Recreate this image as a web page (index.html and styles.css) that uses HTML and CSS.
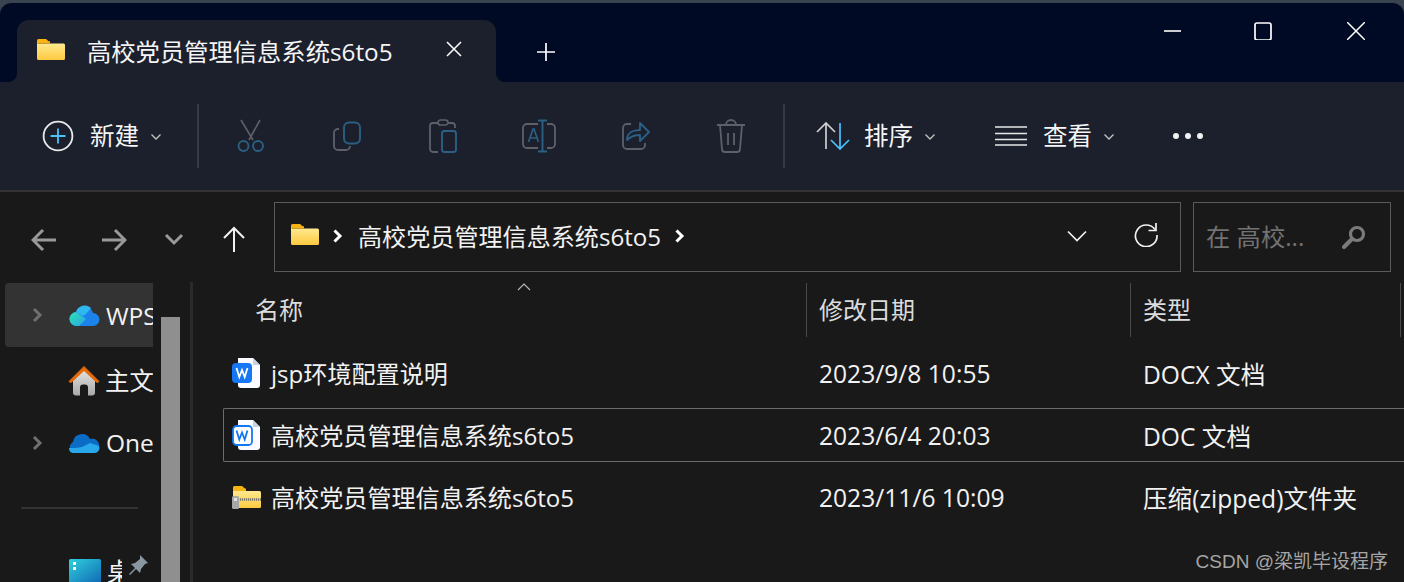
FILE: index.html
```html
<!DOCTYPE html>
<html lang="zh-CN">
<head>
<meta charset="utf-8">
<title>高校党员管理信息系统s6to5</title>
<link rel="stylesheet" href="styles.css">
</head>
<body>
<svg class="defs" width="0" height="0" aria-hidden="true">
  <defs>
    <linearGradient id="fy" x1="0" y1="0" x2="0" y2="1"><stop offset="0" stop-color="#ffe98f"/><stop offset="1" stop-color="#fdc93f"/></linearGradient>
    <linearGradient id="wps" x1="0" y1="0" x2="1" y2="1"><stop offset="0" stop-color="#2fe0b0"/><stop offset="1" stop-color="#27a6e8"/></linearGradient>
    <linearGradient id="home" x1="0" y1="0" x2="0" y2="1"><stop offset="0" stop-color="#e6e6e6"/><stop offset="1" stop-color="#a9a9a9"/></linearGradient>
    <linearGradient id="desk" x1="0" y1="0" x2="1" y2="1"><stop offset="0" stop-color="#2fd0dd"/><stop offset="1" stop-color="#1169b5"/></linearGradient>
    <symbol id="folder" viewBox="0 0 28 22">
      <path d="M0 2.500A1.500 1.500 0 0 1 1.500 1h7.500l3.500 3H1v3H0z" fill="#f7b314"/>
      <path d="M0 5.500h26.500A1.500 1.500 0 0 1 28 7v13.500a1.500 1.500 0 0 1-1.500 1.500H1.500A1.500 1.500 0 0 1 0 20.500z" fill="url(#fy)"/>
      <path d="M0 4h11l2-1 0 2.500H0z" fill="#f7b314"/>
    </symbol>
    <symbol id="chev" viewBox="0 0 12 8"><path d="M1.500 1.500 6 6l4.500-4.500" fill="none" stroke="currentColor" stroke-width="1.300"/></symbol>
    <symbol id="doc" viewBox="0 0 29 32">
      <path d="M6 1h15l7 7v20a3 3 0 0 1-3 3H9a3 3 0 0 1-3-3z" fill="#fbfcff"/>
      <path d="M21 1l7 7h-7z" fill="#c9d2e0"/>
    </symbol>
  </defs>
</svg>
<div class="window">
  <header class="titlebar">
    <div class="tab">
      <svg class="tab-folder"><use href="#folder"/></svg>
      <span class="tab-title">高校党员管理信息系统s6to5</span>
      <svg class="tab-close" viewBox="0 0 18 18"><path d="M2 2l14 14M16 2 2 16" stroke="#fff" stroke-width="1.500"/></svg>
    </div>
    <svg class="tab-add" viewBox="0 0 20 20"><path d="M10 1v18M1 10h18" stroke="#fff" stroke-width="1.700"/></svg>
    <div class="controls">
      <svg class="ctl ctl-min" viewBox="0 0 18 18"><path d="M0 9h17" stroke="#fff" stroke-width="1.600"/></svg>
      <svg class="ctl ctl-max" viewBox="0 0 18 18"><rect x="1" y="1" width="16" height="17" rx="2" fill="none" stroke="#fff" stroke-width="1.700"/></svg>
      <svg class="ctl ctl-close" viewBox="0 0 18 18"><path d="M0 0l18 18M18 0 0 18" stroke="#fff" stroke-width="1.500"/></svg>
    </div>
  </header>

  <section class="toolbar">
    <div class="new-btn">
      <svg class="ico-new" viewBox="0 0 30 30"><circle cx="15" cy="15" r="13.500" fill="none" stroke="#e9e9e9" stroke-width="1.700"/><path d="M15 8v14M8 15h14" stroke="#4cc2ff" stroke-width="1.700"/></svg>
      <span class="tb-label">新建</span>
      <svg class="tb-chev"><use href="#chev"/></svg>
    </div>
    <i class="sep"></i>
    <div class="tools">
      <span class="tool"><svg viewBox="0 0 30 34"><path d="M5 1l12 20M24 1 13 21" fill="none" stroke="#5d6068" stroke-width="1.600"/><circle cx="7.500" cy="27" r="5" fill="none" stroke="#2c5f83" stroke-width="1.900"/><circle cx="22" cy="27" r="5" fill="none" stroke="#2c5f83" stroke-width="1.900"/></svg></span>
      <span class="tool"><svg viewBox="-1 -2 30 34"><path d="M6 8H5a4 4 0 0 0-4 4v13a4 4 0 0 0 4 4h8a4 4 0 0 0 4-4" fill="none" stroke="#5d6068" stroke-width="1.800"/><rect x="11" y="1.500" width="16" height="21" rx="5" fill="none" stroke="#2c5f83" stroke-width="1.900"/></svg></span>
      <span class="tool"><svg viewBox="-1 0 30 34"><path d="M9 33H4a3 3 0 0 1-3-3V7a3 3 0 0 1 3-3h5M19 4h4a3 3 0 0 1 3 3v2" fill="none" stroke="#5d6068" stroke-width="1.800"/><rect x="9" y="1" width="10" height="5" rx="2.500" fill="none" stroke="#5d6068" stroke-width="1.700"/><rect x="13" y="12" width="14" height="21" rx="2.500" fill="none" stroke="#2c5f83" stroke-width="1.900"/></svg></span>
      <span class="tool"><svg class="wide" viewBox="0 0 34 34"><path d="M16 5H5a4 4 0 0 0-4 4v16a4 4 0 0 0 4 4h11M25 5h4a4 4 0 0 1 4 4v16a4 4 0 0 1-4 4h-4" fill="none" stroke="#5d6068" stroke-width="1.800"/><path d="M16 1.500h9M16 32.500h9M20.500 1.500v31" fill="none" stroke="#2c5f83" stroke-width="1.900"/><path d="M6.500 23 11 10h1l4.500 13M8 19h7" fill="none" stroke="#2c5f83" stroke-width="1.700"/></svg></span>
      <span class="tool"><svg viewBox="-1 -1 30 34"><path d="M10 4H6a4 4 0 0 0-4 4v17a4 4 0 0 0 4 4h14a4 4 0 0 0 4-4v-2" fill="none" stroke="#5d6068" stroke-width="1.800"/><path d="M6 20c0-7 6-10 13-10V3l9 9-9 9v-6c-6 0-9 1-13 5z" fill="none" stroke="#2c5f83" stroke-width="1.900" stroke-linejoin="round"/></svg></span>
      <span class="tool"><svg viewBox="0 0 30 34"><path d="M1 6h28M10 6a5 5 0 0 1 10 0M4 6l2 24a3 3 0 0 0 3 3h12a3 3 0 0 0 3-3l2-24M12 14v12M18 14v12" fill="none" stroke="#5d6068" stroke-width="1.800"/></svg></span>
    </div>
    <i class="sep"></i>
    <div class="menu menu-sort">
      <svg class="ico-sort" viewBox="0 0 34 28"><path d="M1 10 10 1l9 9M10 1v26" fill="none" stroke="#cfcfcf" stroke-width="1.700"/><path d="M15 18l9 9 9-9M24 1v26" fill="none" stroke="#4cc2ff" stroke-width="1.700"/></svg>
      <span class="tb-label">排序</span>
      <svg class="tb-chev"><use href="#chev"/></svg>
    </div>
    <div class="menu menu-view">
      <svg class="ico-view" viewBox="0 0 32 20"><path d="M0 1h32M0 7.500h32M0 13.500h32M0 19h32" stroke="#e6e6e6" stroke-width="1.500"/></svg>
      <span class="tb-label">查看</span>
      <svg class="tb-chev"><use href="#chev"/></svg>
    </div>
    <div class="more"><i></i><i></i><i></i></div>
  </section>

  <nav class="navbar">
    <svg class="nav-ico nav-back" viewBox="0 0 26 24"><path d="M12 2 2 12l10 10M2 12h23" fill="none" stroke="#999" stroke-width="3"/></svg>
    <svg class="nav-ico nav-fwd" viewBox="0 0 26 24"><path d="M14 2l10 10-10 10M24 12H1" fill="none" stroke="#999" stroke-width="3"/></svg>
    <svg class="nav-ico nav-down" viewBox="0 0 20 14"><path d="M2 2l8 8 8-8" fill="none" stroke="#999" stroke-width="3"/></svg>
    <svg class="nav-ico nav-up" viewBox="0 0 24 26"><path d="M2 12 12 2l10 10M12 2v24" fill="none" stroke="#f2f2f2" stroke-width="2"/></svg>
    <div class="address">
      <svg class="addr-folder"><use href="#folder"/></svg>
      <svg class="crumb crumb-a" viewBox="0 0 10 14"><path d="M1.500 1.500 7 7l-5.500 5.500" fill="none" stroke="#fff" stroke-width="3"/></svg>
      <span class="addr-text">高校党员管理信息系统s6to5</span>
      <svg class="crumb crumb-b" viewBox="0 0 10 14"><path d="M1.500 1.500 7 7l-5.500 5.500" fill="none" stroke="#fff" stroke-width="3"/></svg>
      <span class="spacer"></span>
      <svg class="addr-down" viewBox="0 0 20 12"><path d="M1 1.500l9 9 9-9" fill="none" stroke="#f2f2f2" stroke-width="1.700"/></svg>
      <svg class="addr-refresh" viewBox="0 0 24 24"><path d="M21 6.500A10.800 10.800 0 1 0 23 12" fill="none" stroke="#f2f2f2" stroke-width="1.700"/><path d="M22 0v7.500h-7.500" fill="none" stroke="#f2f2f2" stroke-width="1.700"/></svg>
    </div>
    <div class="search">
      <span class="search-text">在 高校...</span>
      <svg class="search-ico" viewBox="0 0 24 24"><circle cx="15" cy="9" r="6.500" fill="none" stroke="#7b7b7b" stroke-width="3.200"/><path d="M10 14 2 22" stroke="#7b7b7b" stroke-width="4" stroke-linecap="round"/></svg>
    </div>
  </nav>

  <main class="body">
    <aside class="sidebar">
      <div class="side-col">
        <div class="side-item side-active side-first">
          <svg class="side-chev" viewBox="0 0 12 16"><path d="M2 2l6 6-6 6" fill="none" stroke="#6f6f6f" stroke-width="3"/></svg>
          <svg class="side-ico" viewBox="0 0 31 24"><path d="M8 23a7 7 0 0 1-1-14 9 9 0 0 1 17 1 6.500 6.500 0 0 1 0 13z" fill="#1b83ea"/><path d="M8 23a7 7 0 0 1-1-14l10 7-7 7z" fill="url(#wps)"/><path d="M7 9a9 9 0 0 1 15-4l-5 6-3 2z" fill="#2fb8f0"/></svg>
          <span class="side-text">WPS云盘</span>
        </div>
        <div class="side-item side-home">
          <span class="side-chev-gap"></span>
          <svg class="side-ico side-ico-home" viewBox="0 0 32 30"><path d="M5 13 16 3l11 10v14a3 3 0 0 1-3 3h-4v-8a3 3 0 0 0-3-3h-2a3 3 0 0 0-3 3v8H8a3 3 0 0 1-3-3z" fill="url(#home)"/><path d="M1 16 16 1l15 15-2 1-13-12L3 17z" fill="#e66a0a" stroke="#e66a0a" stroke-linejoin="round"/></svg>
          <span class="side-text">主文件夹</span>
        </div>
        <div class="side-item side-one">
          <svg class="side-chev" viewBox="0 0 12 16"><path d="M2 2l6 6-6 6" fill="none" stroke="#6f6f6f" stroke-width="3"/></svg>
          <svg class="side-ico side-ico-one" viewBox="0 0 32 21"><path d="M6 20a6 6 0 0 1-1-11 9 9 0 0 1 17-3 7 7 0 0 1 9 8z" fill="#0a6cc4"/><path d="M5 20h22a5 5 0 0 0 4-7l-9-3-8 4-7 1-6 0a5 5 0 0 0 4 5z" fill="#28a8ea"/></svg>
          <span class="side-text">OneDrive</span>
        </div>
        <hr class="side-rule">
        <div class="side-item side-desk">
          <span class="side-chev-gap"></span>
          <svg class="side-ico side-ico-desk" viewBox="0 0 32 24"><rect width="32" height="24" rx="1.500" fill="url(#desk)"/><path d="M4 3h3v3H4zM4 8h3v3H4z" fill="#fff"/></svg>
          <span class="side-text side-text-desk">桌面</span>
          <svg class="pin" viewBox="0 0 22 22"><path d="M13 1l8 8-3 1-4 5-1 4-4-4-6 6-1-1 6-6-4-4 4-1 5-4z" fill="#8a97a3"/></svg>
        </div>
      </div>
      <div class="scrollbar"></div>
    </aside>
    <i class="divider"></i>
    <section class="files">
      <svg class="sort-caret" viewBox="0 0 14 8"><path d="M1 7l6-6 6 6" fill="none" stroke="#bbb" stroke-width="1.100"/></svg>
      <div class="head">
        <div class="h-name">名称</div>
        <div class="h-col">修改日期</div>
        <div class="h-col h-type">类型</div>
      </div>
      <div class="row">
        <div class="c-name">
          <svg class="file-ico" viewBox="0 0 29 32"><use href="#doc"/><rect y="6" width="20" height="20" rx="4" fill="#1677f5"/><path d="M4.500 11l2.800 9 2.700-7 2.700 7 2.800-9" fill="none" stroke="#fff" stroke-width="1.800"/></svg>
          <span>jsp环境配置说明</span>
        </div>
        <div class="c-col">2023/9/8 10:55</div>
        <div class="c-col">DOCX 文档</div>
      </div>
      <div class="row row-focus">
        <div class="c-name">
          <svg class="file-ico" viewBox="0 0 29 32"><use href="#doc"/><rect x="1" y="7" width="19" height="19" rx="3.500" fill="#fff" stroke="#1677f5" stroke-width="1.800"/><path d="M4.500 11.500l2.800 9 2.700-7 2.700 7 2.800-9" fill="none" stroke="#1677f5" stroke-width="1.800"/></svg>
          <span>高校党员管理信息系统s6to5</span>
        </div>
        <div class="c-col">2023/6/4 20:03</div>
        <div class="c-col">DOC 文档</div>
      </div>
      <div class="row">
        <div class="c-name">
          <svg class="file-ico" viewBox="0 0 29 24"><path d="M1 2.500A1.500 1.500 0 0 1 2.500 1h7.500l3.500 3H1z" fill="#f7b314"/><path d="M1 4h11l2-.5V7H1z" fill="#f7b314"/><path d="M1 6h26.500A1.500 1.500 0 0 1 29 7.500v14a1.500 1.500 0 0 1-1.500 1.500h-25A1.500 1.500 0 0 1 1 21.500z" fill="url(#fy)"/><path d="M4 14.500h25" stroke="#77746a" stroke-width="2.400" stroke-dasharray="1.200 .8"/><rect x="0" y="11" width="7" height="13" rx="1.500" fill="#a7a7a7"/><rect x="2" y="13" width="3" height="3" fill="#e2e2e2"/></svg>
          <span>高校党员管理信息系统s6to5</span>
        </div>
        <div class="c-col">2023/11/6 10:09</div>
        <div class="c-col">压缩(zipped)文件夹</div>
      </div>
      <div class="watermark">CSDN @梁凯毕设程序</div>
    </section>
  </main>
</div>
</body>
</html>
```

FILE: styles.css
```css
* { box-sizing: border-box; }
html, body { margin: 0; padding: 0; height: 100%; background: #191919; overflow: hidden; }
body { font-family: "Open Sans", "Noto Sans CJK SC", sans-serif; color: #f2f2f2; }
.defs { display: block; height: 0; }
svg { display: block; flex: none; }
i { display: block; }

.window { width: 1404px; height: 582px; display: flex; flex-direction: column; background: #3a4451; padding-top: 2px; overflow: hidden; }

/* title bar */
.titlebar { height: 80px; flex: none; display: flex; align-items: flex-end; background: #000a24; border-radius: 12px 12px 0 0; border-top: 1px solid #39424f; padding-left: 17px; }
.tab { width: 479px; height: 62px; background: #1c202d; border-radius: 12px 12px 0 0; display: flex; align-items: center; position: relative; padding: 0 0 0 20px; }
.tab::before, .tab::after { content: ""; position: absolute; bottom: 0; width: 8px; height: 8px; }
.tab::before { left: -8px; background: radial-gradient(circle at 0 0, #000a24 7.500px, #1c202d 8px); }
.tab::after { right: -8px; background: radial-gradient(circle at 100% 0, #000a24 7.500px, #1c202d 8px); }
.tab-folder { width: 28px; height: 22px; margin-top: -4px; }
.tab-title { font-size: 24.300px; margin-left: 22px; width: 335px; white-space: nowrap; margin-top: -1px; color: #f5f5f5; }
.tab-close { width: 18px; height: 18px; margin-left: 23px; margin-top: -4px; }
.tab-add { width: 20px; height: 20px; margin: 0 0 20px 40px; }
.controls { margin-left: auto; display: flex; align-items: flex-start; align-self: flex-start; padding-top: 19px; padding-right: 39px; }
.ctl { width: 18px; height: 18px; }
.ctl-min { margin-right: 72px; }
.ctl-max { margin-right: 75px; }

/* tool bar */
.toolbar { height: 110px; flex: none; display: flex; align-items: center; background: #1b202c; border-bottom: 2px solid #333; padding-left: 42px; }
.new-btn { display: flex; align-items: center; width: 155px; }
.ico-new { width: 32px; height: 32px; margin-right: 16px; }
.tb-label { font-size: 24.500px; line-height: 30px; color: #f5f5f5; }
.tb-chev { width: 12px; height: 8px; color: #c4c4c4; margin-left: 11px; margin-top: 1px; }
.sep { width: 2px; height: 64px; background: #353a45; flex: none; }
.tools { display: flex; margin: 0 4px; }
.tool { width: 96px; display: flex; justify-content: center; }
.tool svg { width: 30px; height: 34px; }
.tool svg.wide { width: 34px; }
.menu { display: flex; align-items: center; }
.menu-sort { margin-left: 31px; width: 179px; }
.ico-sort { width: 34px; height: 28px; margin-right: 14px; }
.ico-view { width: 32px; height: 20px; margin-right: 16px; }
.menu-view { width: 178px; }
.more { display: flex; gap: 6px; }
.more i { width: 6px; height: 6px; border-radius: 50%; background: #f2f2f2; }

/* nav */
.navbar { height: 90px; flex: none; display: flex; align-items: flex-start; background: #191919; padding: 10px 13px 0 0; }
.nav-ico { margin-top: 26px; }
.nav-back { width: 26px; height: 24px; margin-left: 31px; }
.nav-fwd { width: 26px; height: 24px; margin-left: 44px; }
.nav-down { width: 20px; height: 14px; margin-left: 37px; margin-top: 31px; }
.nav-up { width: 24px; height: 26px; margin-left: 38px; margin-top: 24px; }
.address { width: 907px; height: 70px; margin-left: 28px; border: 1px solid #5a5a5a; display: flex; align-items: center; padding-left: 16px; }
.addr-folder { width: 28px; height: 22px; margin-top: -6px; }
.crumb { width: 10px; height: 14px; margin-top: -2px; }
.crumb-a { margin-left: 14px; }
.crumb-b { margin-left: 14px; }
.addr-text { font-size: 24.100px; margin-left: 15px; margin-top: -4px; white-space: nowrap; }
.spacer { flex: 1; }
.addr-down { width: 20px; height: 12px; margin-right: 47px; margin-top: -3px; }
.addr-refresh { width: 24px; height: 24px; margin-right: 22px; margin-top: -5px; }
.search { width: 198px; height: 70px; margin-left: 12px; border: 1px solid #5a5a5a; display: flex; align-items: center; justify-content: space-between; padding: 0 24px 0 12px; }
.search-text { font-size: 24.300px; color: #727272; white-space: nowrap; margin-top: -3px; }
.search-ico { width: 24px; height: 24px; }

/* body */
.body { flex: 1; display: flex; background: #191919; min-height: 0; }
.sidebar { width: 190px; flex: none; display: flex; padding-left: 5px; overflow: hidden; }
.side-col { width: 148px; flex: none; overflow: hidden; }
.side-item { display: flex; align-items: center; white-space: nowrap; font-size: 24.500px; }
.side-first { height: 64px; margin-top: 1px; }
.side-active { background: #333; border-radius: 4px 0 0 4px; }
.side-home { height: 66px; }
.side-one { height: 60px; }
.side-chev { width: 12px; height: 16px; margin-left: 27px; margin-right: 25px; }
.side-chev-gap { width: 64px; flex: none; }
.side-ico { width: 31px; height: 24px; margin-right: 6px; }
.side-ico-home { width: 32px; height: 31px; margin-left: -1px; margin-right: 5px; }
.side-ico-one { width: 32px; height: 21px; margin-left: -1px; margin-right: 6px; }
.side-ico-desk { width: 32px; height: 24px; margin-right: 6px; }
.side-text { overflow: hidden; margin-top: -2px; }
.side-rule { border: 0; height: 2px; background: #333; margin: 34px 15px 0 16px; }
.side-desk { height: 64px; margin-top: 30px; }
.side-text-desk { width: 15px; flex: none; }
.pin { width: 22px; height: 22px; margin-left: 5px; margin-top: -13px; }
.scrollbar { width: 19px; flex: none; background: #8f8f8f; margin: 35px 0 0 8px; }
.divider { width: 3px; flex: none; background: #2a2a2a; }

/* files */
.files { flex: 1; position: relative; padding-top: 1px; min-width: 0; }
.sort-caret { position: absolute; left: 324px; top: 1px; width: 14px; height: 8px; }
.head { display: grid; grid-template-columns: 613px 324px 1fr; height: 52px; font-size: 24px; color: #dcdcdc; }
.h-name { padding-left: 62px; line-height: 54px; }
.h-col { padding-left: 12px; line-height: 54px; border-left: 1px solid #4a4a4a; }
.h-type { border-right: 1px solid #4a4a4a; width: 271px; }
.row { display: grid; grid-template-columns: 583px 324px 1fr; height: 54px; margin: 11px 0 0 30px; align-items: center; font-size: 24.100px; border: 1px solid transparent; }
.row + .row { margin-top: 8px; }
.row-focus { border-color: #6c6c6c; border-right: 0; border-radius: 2px 0 0 2px; }
.c-name { display: flex; align-items: center; padding-left: 8px; white-space: nowrap; }
.c-name span { margin-top: -1px; }
.c-col { padding-left: 12px; white-space: nowrap; font-size: 24.600px; }
.file-ico { width: 29px; height: 32px; margin-right: 10px; }
.watermark { position: absolute; right: 16px; bottom: 8px; font-size: 19px; color: #a6a6a6; font-family: "Liberation Sans", "Noto Sans CJK SC", sans-serif; line-height: 24px; }
```
